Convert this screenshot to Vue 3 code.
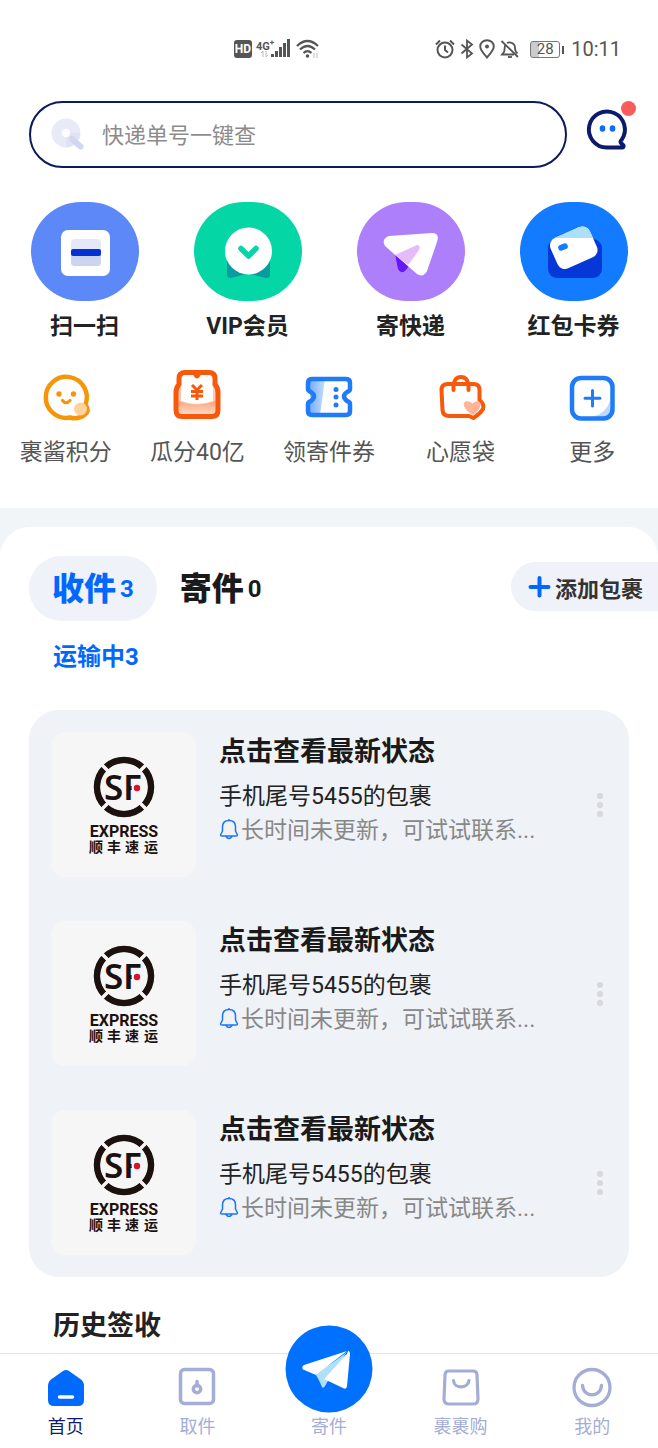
<script setup>
import { ref } from 'vue'

const keyword = ref('')
const parcels = [
  { id: 1, title: '点击查看最新状态', owner: '手机尾号5455的包裹', note: '长时间未更新，可试试联系...' },
  { id: 2, title: '点击查看最新状态', owner: '手机尾号5455的包裹', note: '长时间未更新，可试试联系...' },
  { id: 3, title: '点击查看最新状态', owner: '手机尾号5455的包裹', note: '长时间未更新，可试试联系...' },
]
</script>

<template>
  <div class="app">
    <header class="status">
      <div class="status-mid">
        <span class="hd">HD</span>
        <span class="net">4G<sup>+</sup></span>
        <svg class="signal" width="32" height="22" viewBox="0 0 32 22" aria-hidden="true">
          <g stroke="#bbb" stroke-width="1" fill="none">
            <path d="M3 13v6M1 15l2-2M6 13v6M6 19l2-2" />
          </g>
          <g fill="#555">
            <rect x="11" y="16" width="3" height="3" />
            <rect x="15" y="13" width="3" height="6" />
            <rect x="19" y="9" width="3" height="10" />
            <rect x="23" y="5" width="3" height="14" />
            <rect x="27" y="1" width="3" height="18" />
          </g>
        </svg>
        <svg width="24" height="22" viewBox="0 0 24 22" fill="none" stroke="#555" aria-hidden="true">
          <path d="M1 8Q11.500 -2 22 8" stroke-width="2.200" />
          <path d="M4 11.500Q11.500 4.500 19 11.500M7.500 15Q11.500 11 15.500 15" stroke-width="2.200" />
          <circle cx="11.500" cy="18" r="1.800" fill="#555" stroke="none" />
          <path d="M18 15v5M21 15v5" stroke="#bbb" stroke-width="1" />
        </svg>
      </div>
      <div class="status-right">
        <svg width="20" height="20" viewBox="0 0 20 20" fill="none" stroke="#555" stroke-width="2" aria-hidden="true">
          <circle cx="10" cy="11" r="7.500" />
          <path d="M10 6.500V11l3 2.500M1 5.500L5 1.500M19 5.500L15 1.500" />
        </svg>
        <svg width="14" height="20" viewBox="0 0 14 20" fill="none" stroke="#555" stroke-width="1.800" aria-hidden="true">
          <path d="M1.500 5.500L12 14.500 7 18.500V1.500L12 5.500 1.500 14.500" />
        </svg>
        <svg width="16" height="20" viewBox="0 0 16 20" fill="none" stroke="#555" stroke-width="1.900" aria-hidden="true">
          <path d="M8 18.500C4 14 1.200 11 1.200 7.500a6.800 6.300 0 0 1 13.600 0C14.800 11 12 14 8 18.500z" />
          <circle cx="8" cy="7.500" r="2" fill="#555" stroke="none" />
        </svg>
        <svg width="20" height="20" viewBox="0 0 20 20" fill="none" stroke="#555" stroke-width="1.800" aria-hidden="true">
          <path d="M1.500 2L18 18M5 6.500C4.500 9 4.800 11 4 13L2 15.500H14M7 4C9 2.800 15 3 15 9c0 2.500.5 4 2.500 5.500" />
          <path d="M8 18h4" />
        </svg>
        <span class="battery"><span class="battery-text">28</span></span>
        <time class="clock">10:11</time>
      </div>
    </header>

    <div class="search-row">
      <label class="search">
        <svg width="34" height="34" viewBox="0 0 34 34" aria-label="搜索">
          <circle cx="15" cy="15" r="14.500" fill="#e8eaf8" />
          <path d="M15 15L29 15A14.500 14.500 0 0 1 15 29.500z" fill="#dcdff3" opacity=".7" />
          <path d="M21 21L29.500 28.500" stroke="#d2d6f1" stroke-width="6" stroke-linecap="round" />
          <circle cx="15" cy="15" r="4.200" fill="#fff" />
        </svg>
        <input v-model="keyword" type="text" placeholder="快递单号一键查" aria-label="快递单号一键查" />
      </label>
      <button class="chat" type="button" aria-label="消息">
        <svg width="42" height="42" viewBox="0 0 42 42" aria-hidden="true">
          <path d="M20 38.500A18 18 0 1 1 34.500 31Q32.500 32.500 34.500 34.500L36.500 36.500Q37 38.500 35 38.500z" fill="none" stroke="#0b1a6b" stroke-width="4" stroke-linejoin="round" />
          <ellipse cx="15.500" cy="19.500" rx="2.800" ry="3.300" fill="#0a6df5" />
          <ellipse cx="25.500" cy="19.500" rx="2.800" ry="3.300" fill="#0a6df5" />
        </svg>
        <span class="dot"></span>
      </button>
    </div>

    <nav class="primary">
      <button type="button">
        <svg width="108" height="99" viewBox="0 0 108 99" aria-hidden="true">
          <rect width="108" height="99" rx="50" ry="49.500" fill="#5d88f7" />
          <rect x="30" y="28" width="49" height="46" rx="7" fill="#fff" />
          <rect x="40" y="37" width="30" height="27" rx="4" fill="#e4e8f8" />
          <path d="M40 52h30v8q0 4-4 4H44q-4 0-4-4z" fill="#ccd4f2" />
          <rect x="40" y="47" width="30" height="7" rx="2" fill="#0432d3" />
        </svg>
        <span>扫一扫</span>
      </button>
      <button type="button">
        <svg width="108" height="99" viewBox="0 0 108 99" aria-hidden="true">
          <rect width="108" height="99" rx="50" ry="49.500" fill="#05d6a5" />
          <path d="M33 58V73q0 3 4 3L54 71.500 72 76q4 0 4-3V58z" fill="#089ba0" />
          <circle cx="54.500" cy="49" r="23.500" fill="#fff" />
          <path d="M47 46.500L54.500 54 62 46.500" fill="none" stroke="#05d6a5" stroke-width="5.500" stroke-linecap="round" stroke-linejoin="round" />
        </svg>
        <span>VIP会员</span>
      </button>
      <button type="button">
        <svg width="108" height="99" viewBox="0 0 108 99" aria-hidden="true">
          <rect width="108" height="99" rx="50" ry="49.500" fill="#ad7ffa" />
          <path d="M38 52L41 67Q44 73 49 68L53 62z" fill="#6518f5" />
          <path d="M32 34L75 31Q83 31 80 40L70 69Q66 76 60 72L28 44Q24 37 32 34z" fill="#fff" />
          <path d="M38 53L60 43Q64 43 62 48L52 62Q51 63 49.500 62z" fill="#e5bcfa" />
        </svg>
        <span>寄快递</span>
      </button>
      <button type="button">
        <svg width="108" height="99" viewBox="0 0 108 99" aria-hidden="true">
          <rect width="108" height="99" rx="50" ry="49.500" fill="#137bff" />
          <rect x="28" y="37" width="54" height="39" rx="9" fill="#0638d7" />
          <clipPath id="card-shape"><rect x="32" y="29" width="43" height="33" rx="8" transform="rotate(-24 54 45)" /></clipPath>
          <g clip-path="url(#card-shape)">
            <rect x="20" y="15" width="70" height="70" fill="#fff" />
            <rect x="20" y="15" width="70" height="21" fill="#addffa" />
          </g>
          <rect x="38" y="42" width="10" height="6" rx="3" transform="rotate(-22 43 45)" fill="#137bff" />
        </svg>
        <span>红包卡券</span>
      </button>
    </nav>

    <nav class="secondary">
      <button type="button">
        <svg width="52" height="52" viewBox="0 0 52 52" fill="none" aria-hidden="true">
          <path d="M30 46.500A20.500 20.500 0 1 1 45.500 33.500Q50 40 44.500 44 38 49 30 46.500z" stroke="#f79509" stroke-width="4.500" stroke-linejoin="round" />
          <circle cx="40.500" cy="38" r="6.500" fill="#fdd29c" />
          <circle cx="19" cy="23" r="2.700" fill="#f79509" />
          <circle cx="33.500" cy="23" r="2.700" fill="#f79509" />
          <path d="M22.500 29.500Q26 34 30 29.500" stroke="#f79509" stroke-width="3.200" stroke-linecap="round" />
        </svg>
        <span>裹酱积分</span>
      </button>
      <button type="button">
        <svg width="52" height="52" viewBox="0 0 52 52" fill="none" aria-hidden="true">
          <defs><linearGradient id="pouch" x1="0" y1="0" x2="0" y2="1"><stop offset="0" stop-color="#ff9f75" /><stop offset="1" stop-color="#ffe4d8" /></linearGradient></defs>
          <path d="M5 16V41q0 5 6 5H41q6 0 6-5V16z" fill="#ffc9b1" />
          <path d="M10 8Q10 2 16 2H36Q42 2 42 8V30Q26 36 10 30z" fill="#fff" />
          <path d="M6 29Q26 38 46 29V46H6z" fill="url(#pouch)" />
          <path d="M14 1.500H38q6 0 6 6v6q3 3 3 8V39q0 6.500-6 6.500H11q-6 0-6-6.500V21.500q0-5 3-8V7.500q0-6 6-6z" stroke="#f7590c" stroke-width="5" />
          <path d="M23 3q3 7 6 0" fill="#f7590c" stroke="#f7590c" stroke-width="2" />
          <path d="M21 14l5 5 5-5M26 19V29M20 20.500h12M20 25h12" stroke="#f7590c" stroke-width="3" />
        </svg>
        <span>瓜分40亿</span>
      </button>
      <button type="button">
        <svg width="52" height="52" viewBox="0 0 52 52" fill="none" aria-hidden="true">
          <defs><linearGradient id="stub"><stop offset="0" stop-color="#6da7fb" /><stop offset="1" stop-color="#c8defe" /></linearGradient></defs>
          <path d="M5 8H22L17 44H5V34q5-8 0-14z" fill="url(#stub)" />
          <path d="M9 8H43q4 0 4 4v6q0 2-3 3-6 4 0 9 3 1 3 3v7q0 4-4 4H9q-4 0-4-4V33q0-2 3-3 6-5 0-9-3-1-3-3V12q0-4 4-4z" stroke="#1f7bf8" stroke-width="4.500" stroke-linejoin="round" />
          <circle cx="33" cy="18.500" r="2.500" fill="#1f7bf8" /><circle cx="33" cy="26" r="2.500" fill="#1f7bf8" /><circle cx="33" cy="34" r="2.500" fill="#1f7bf8" />
        </svg>
        <span>领寄件券</span>
      </button>
      <button type="button">
        <svg width="52" height="52" viewBox="0 0 52 52" fill="none" aria-hidden="true">
          <path d="M13 13H38.500q6 0 6 6V29Q49.500 33 48 38 45 43 38.500 47L34 45H14q-6 0-6.500-6L6.500 19q0-6 6.500-6z" stroke="#f7590c" stroke-width="4" stroke-linejoin="round" />
          <path d="M18.500 19V14Q19.500 6 26 6 32.500 6 33.500 14v5" stroke="#f7590c" stroke-width="4" stroke-linecap="round" />
          <path d="M38 44C23 35 29 26 37.500 32.500 45 26 51 35 38 44z" fill="#ffb496" />
        </svg>
        <span>心愿袋</span>
      </button>
      <button type="button">
        <svg width="52" height="52" viewBox="0 0 52 52" fill="none" aria-hidden="true">
          <path d="M44 29Q41 42 26 46H40q5 0 5-6z" fill="#bdd8fe" />
          <rect x="6" y="7" width="40.500" height="40.500" rx="9" stroke="#1f7bf8" stroke-width="4.500" />
          <path d="M26.500 19.500V35M19 27.200H34" stroke="#1f7bf8" stroke-width="3" stroke-linecap="round" />
        </svg>
        <span>更多</span>
      </button>
    </nav>

    <div class="band">
      <main class="sheet">
        <div class="tabs">
          <button class="tab active" type="button"><b>收件</b><span>3</span></button>
          <button class="tab" type="button"><b>寄件</b><span>0</span></button>
          <button class="add" type="button">
            <svg width="24" height="24" viewBox="0 0 24 24" stroke="#0068ff" stroke-width="4" stroke-linecap="round" aria-hidden="true"><path d="M12.500 3V20.500M3.500 12H21.500" /></svg>
            添加包裹
          </button>
        </div>
        <h2 class="transit">运输中3</h2>

        <ul class="list">
          <li v-for="p in parcels" :key="p.id" class="parcel">
            <svg class="logo" width="145" height="145" viewBox="0 0 145 145" role="img" aria-label="SF EXPRESS 顺丰速运">
              <circle cx="73" cy="55" r="27" fill="none" stroke="#1c110e" stroke-width="6.500" />
              <path d="M48 30L98 80M98 30L48 80" stroke="#f6f6f6" stroke-width="3.500" />
              <circle cx="73" cy="55" r="23.500" fill="#f6f6f6" />
              <text x="53" y="68" class="sf">S</text>
              <text x="72" y="68" class="sf">F</text>
              <circle cx="86.500" cy="56" r="6" fill="#f6f6f6" />
              <circle cx="86" cy="56" r="3.200" fill="#d8122a" />
              <text x="73" y="105" class="express" text-anchor="middle">EXPRESS</text>
              <text x="38 56 74 93" y="120" class="brand">顺丰速运</text>
            </svg>
            <div class="info">
              <h3>{{ p.title }}</h3>
              <p class="owner">{{ p.owner }}</p>
              <p class="note">
                <svg width="20" height="22" viewBox="0 0 20 22" fill="none" stroke="#1a75f5" stroke-width="1.500" stroke-linejoin="round" aria-hidden="true">
                  <path d="M10 2.500C6 2.500 3.500 5 3.500 9V13L1.500 17Q1.500 18 3 18H17Q18.500 18 18.500 17L16.500 13V9C16.500 5 14 2.500 10 2.500zM10 2.500V1M7 18.500Q10 22.500 13 18.500" />
                </svg>
                <span>{{ p.note }}</span>
              </p>
            </div>
            <button class="more" type="button" aria-label="更多操作"><i></i><i></i><i></i></button>
          </li>
        </ul>
        <h2 class="history">历史签收</h2>
      </main>
    </div>

    <nav class="tabbar">
      <a href="#home" class="current">
        <svg width="44" height="44" viewBox="0 0 44 44" aria-hidden="true">
          <path d="M19 5Q22 3 25 5L37 13.500Q40 16 40 20V34q0 6-6 6H10q-6 0-6-6V20q0-4 3-6.500z" fill="#006aff" />
          <path d="M15.500 31H28.500" stroke="#fff" stroke-width="3.500" stroke-linecap="round" />
        </svg>
        <span>首页</span>
      </a>
      <a href="#pickup">
        <svg width="44" height="44" viewBox="0 0 44 44" fill="none" stroke="#a4add6" aria-hidden="true">
          <rect x="5.500" y="3.500" width="33" height="34" rx="4" stroke-width="3.500" />
          <circle cx="22" cy="23" r="3.700" stroke-width="3.500" />
          <path d="M22 15.500V20" stroke-width="3.500" stroke-linecap="round" />
        </svg>
        <span>取件</span>
      </a>
      <a href="#send" class="send">
        <svg width="88" height="88" viewBox="0 0 88 88" aria-hidden="true">
          <circle cx="44" cy="44" r="43.500" fill="#0070ff" />
          <path d="M31 48L37 62Q38 64 40 61L44 54 62 29z" fill="#aee0fc" />
          <path d="M62 26L19 40Q16 42 18 44.500L31 50z" fill="#fff" />
          <path d="M63 26Q65 26 65 29L62 61Q61.500 65 58 63L39 54 62 29z" fill="#fff" />
          <path d="M31 50L62 27 39 54 35 57z" fill="#aee0fc" />
        </svg>
        <span>寄件</span>
      </a>
      <a href="#shop">
        <svg width="44" height="44" viewBox="0 0 44 44" fill="none" stroke="#a4add6" stroke-width="3.200" stroke-linecap="round" aria-hidden="true">
          <path d="M10 5H34q4 0 4 4l1 24q0 5-5 5H10q-5 0-5-5L6 9q0-4 4-4z" />
          <path d="M14.500 14.500C15 23 29 23 30 14.500" />
        </svg>
        <span>裹裹购</span>
      </a>
      <a href="#me">
        <svg width="44" height="44" viewBox="0 0 44 44" fill="none" stroke="#a4add6" stroke-width="3.300" stroke-linecap="round" aria-hidden="true">
          <circle cx="22" cy="21.500" r="18" />
          <path d="M12.500 19.500C13.500 32 30.500 32 31.500 19.500" />
        </svg>
        <span>我的</span>
      </a>
    </nav>
  </div>
</template>

<style>
body { background: #fff; }
</style>

<style scoped>
.app {
  font-family: Roboto, "Noto Sans CJK SC", sans-serif;
  color: #222;
  display: flex;
  flex-direction: column;
  min-height: 100vh;
  background: #fff;
}
button { border: 0; background: none; padding: 0; font: inherit; color: inherit; cursor: pointer; }
h2, h3, p, ul { margin: 0; padding: 0; }
svg { display: block; flex: none; overflow: visible; }

.status { display: grid; grid-template-columns: 1fr 1fr; align-items: center; height: 98px; color: #555; }
.status-mid { display: flex; align-items: center; justify-content: flex-end; gap: 4px; padding-right: 9px; }
.hd { background: #555; color: #fff; font-size: 12px; line-height: 18px; font-weight: 700; padding: 0 1px; border-radius: 3px; }
.net { width: 0; height: 20px; font-size: 11px; line-height: 11px; font-weight: 700; white-space: nowrap; }
.net sup { font-size: 8px; line-height: 8px; }
.status-right { display: flex; align-items: center; justify-content: flex-end; gap: 5px; padding-right: 37px; }
.battery { position: relative; width: 28px; border: 1px solid #777; border-radius: 3px; margin: 0 6px 0 5px; background: linear-gradient(90deg, #ccc 30%, #fff 30%); text-align: center; font-size: 15px; line-height: 15px; }
.battery::after { content: ""; position: absolute; right: -5px; top: 4px; width: 2px; height: 8px; background: #555; }
.clock { font-size: 20px; }

.search-row { display: flex; align-items: center; padding: 3px 29px 0; gap: 20px; }
.search { flex: 1; display: flex; align-items: center; box-sizing: border-box; height: 67px; border: 2px solid #0b1a5e; border-radius: 34px; padding-left: 20px; gap: 17px; }
.search input { flex: 1; min-width: 0; border: 0; outline: 0; padding: 2px 0 0; background: none; font: inherit; font-size: 22px; line-height: 32px; color: #222; }
.search input::placeholder { color: #8c8c8c; opacity: 1; }
.chat { position: relative; width: 42px; margin-bottom: 10px; }
.dot { position: absolute; right: -7px; top: -8px; width: 15px; height: 15px; border-radius: 50%; background: #fc5b5b; }

.primary { display: grid; grid-template-columns: repeat(4, 1fr); padding: 34px 3px 0; }
.primary button { display: flex; flex-direction: column; align-items: center; gap: 9px; font-size: 23px; line-height: 34px; font-weight: 700; }
.secondary { display: grid; grid-template-columns: repeat(5, 1fr); padding: 27px 0 38px; }
.secondary button { display: flex; flex-direction: column; align-items: center; gap: 13px; font-size: 23px; line-height: 34px; color: #555; }

.band { flex: 1; background: #f1f5f8; padding-top: 19px; }
.sheet { background: #fff; border-radius: 30px 30px 0 0; padding-top: 29px; }
.tabs { display: flex; align-items: center; padding-left: 29px; }
.tab { display: flex; align-items: center; height: 65px; padding: 0 23px; gap: 4px; border-radius: 33px; color: #1a1a1a; font-size: 24px; font-weight: 700; }
.tab b { font-size: 32px; line-height: 46px; }
.tab.active { background: #eff2f8; color: #0068ff; }
.add { display: flex; align-items: center; margin: 0 0 4px auto; height: 49px; padding: 0 15px 0 16px; gap: 4px; background: #eff2f8; border-radius: 25px 0 0 25px; font-size: 22px; font-weight: 700; color: #333; }
.transit { padding: 19px 53px 0; font-size: 24px; line-height: 34px; color: #0068ff; }

.list { list-style: none; margin: 36px 29px 0; padding: 22px; border-radius: 30px; background: #eff2f7; display: flex; flex-direction: column; gap: 44px; }
.parcel { display: flex; align-items: center; }
.logo { background: #f6f6f6; border-radius: 14px; }
.sf { font: 600 35px "Noto Sans", sans-serif; fill: #1c110e; }
.express { font: 700 16px Roboto, sans-serif; fill: #1c110e; }
.brand { font: 700 14px "Noto Sans CJK SC", sans-serif; fill: #1c110e; }
.info { flex: 1; min-width: 0; margin-left: 23px; align-self: flex-start; }
.info h3 { font-size: 27px; line-height: 40px; color: #1a1a1a; }
.owner { margin-top: 8px; font-size: 23px; line-height: 34px; color: #222; }
.note { display: flex; align-items: center; gap: 2px; font-size: 23px; line-height: 34px; color: #888; white-space: nowrap; }
.note svg { margin-bottom: 4px; }
.more { width: 14px; display: flex; flex-direction: column; align-items: center; gap: 3px; }
.more i { width: 6px; height: 6px; border-radius: 50%; background: #d6d8db; }
.history { padding: 29px 53px 7px; font-size: 27px; line-height: 40px; }

.tabbar { position: sticky; bottom: 0; display: grid; grid-template: 94px / repeat(5, 1fr); border-top: 1px solid #e3e6e8; background: #fff; }
.tabbar a { display: flex; flex-direction: column; align-items: center; justify-content: flex-end; gap: 4px; padding-bottom: 8px; font-size: 18px; line-height: 26px; color: #a4add6; text-decoration: none; }
.tabbar .current { color: #101c6b; }
.tabbar .send { gap: 1px; min-height: 0; }
</style>
